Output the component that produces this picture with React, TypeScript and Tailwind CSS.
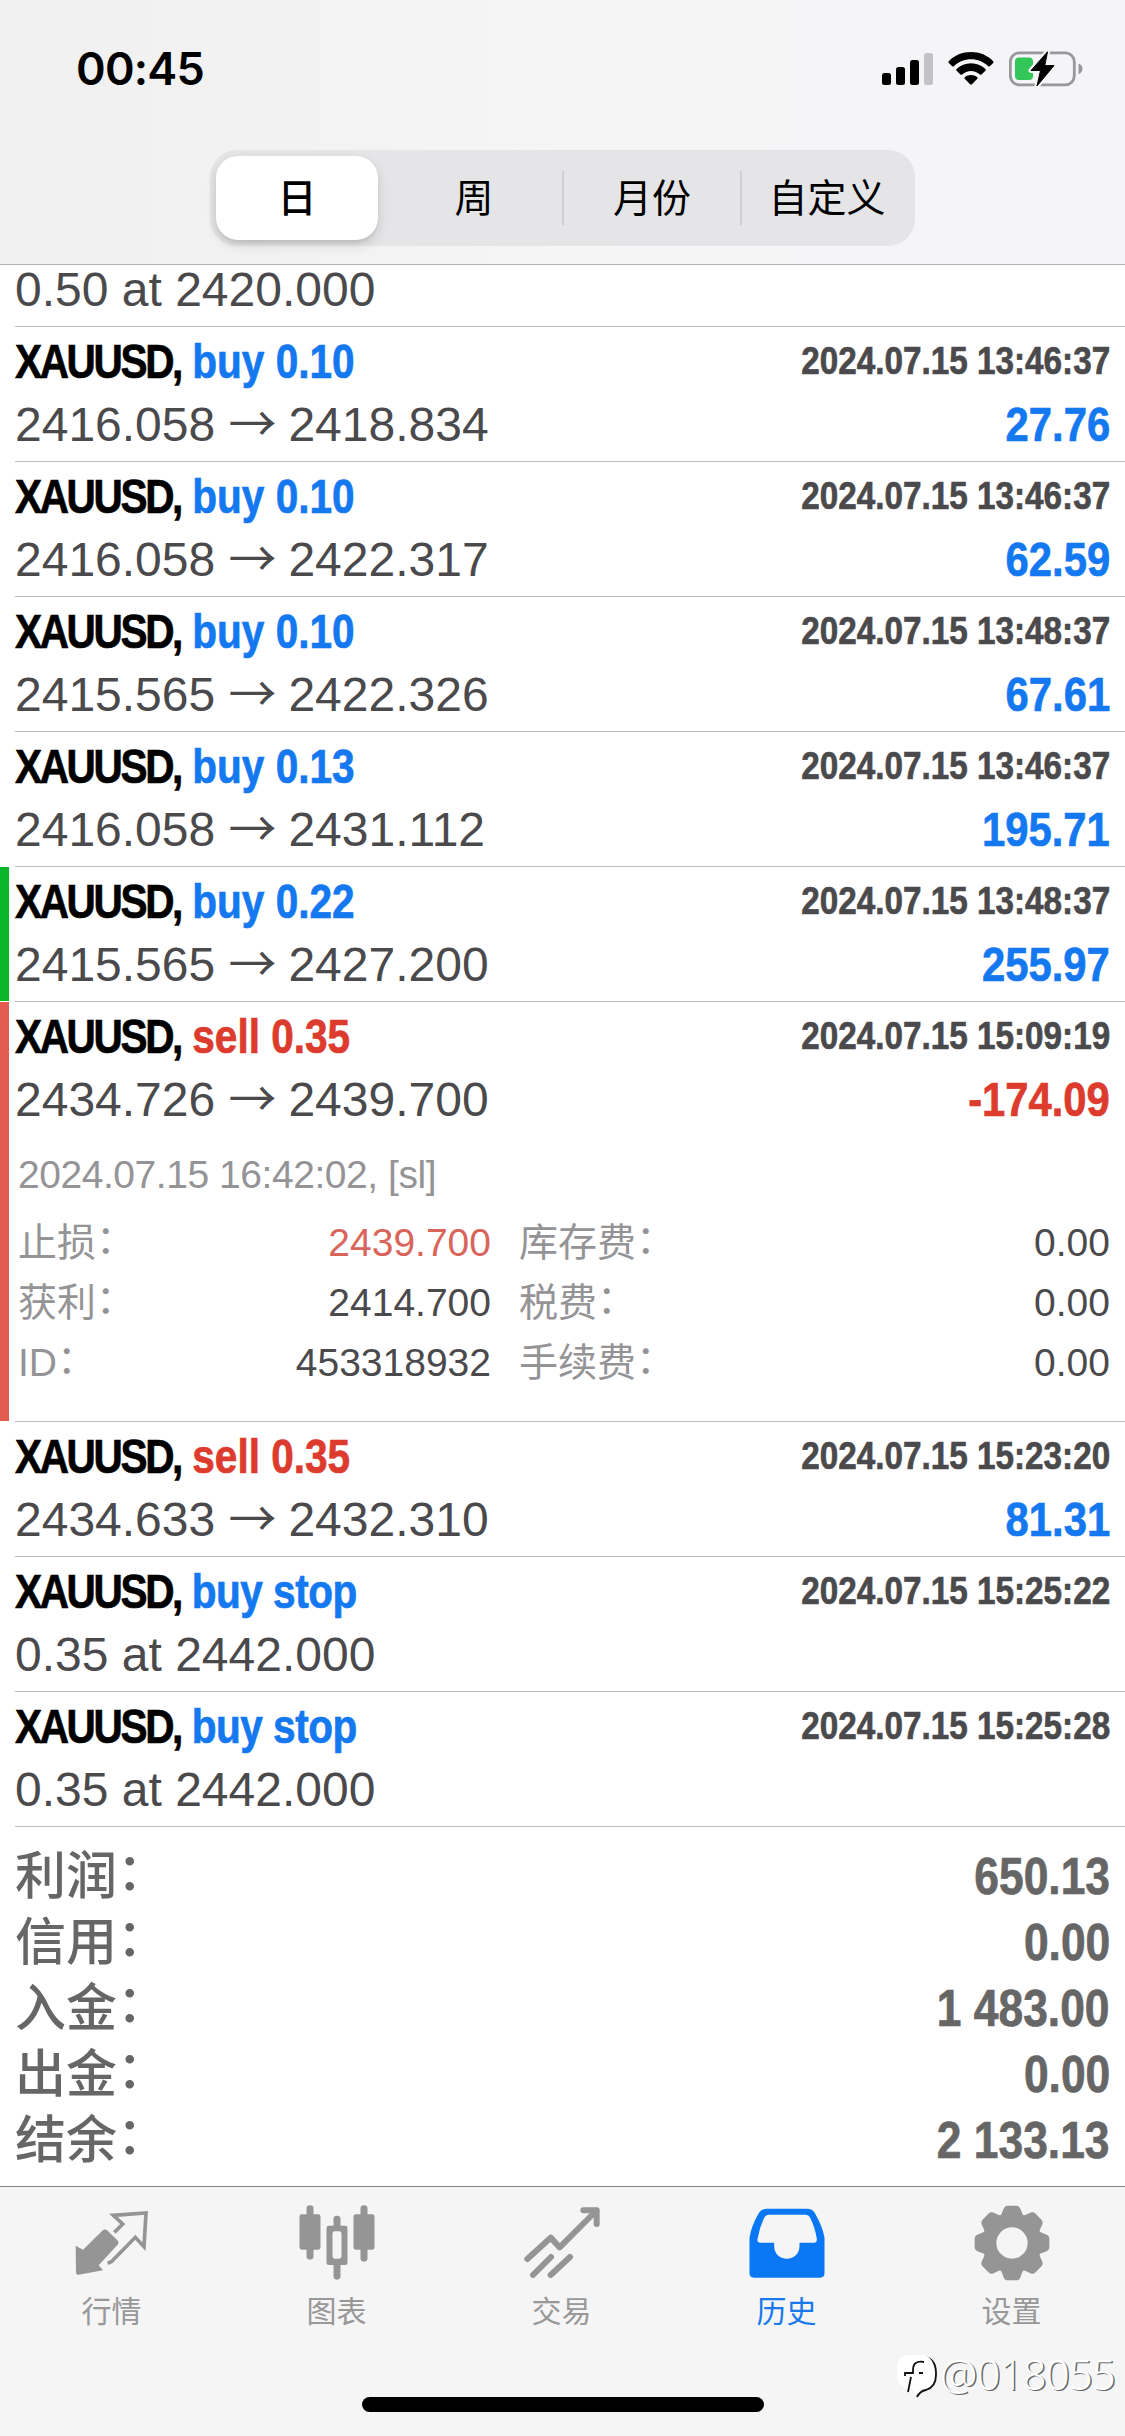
import type { ReactNode } from 'react';

type Side = 'buy' | 'sell';

interface Deal {
  side: Side;
  action: string;
  time: string;
  from: string;
  to?: string;
  profit?: string;
  marker?: 'green' | 'red';
  details?: boolean;
}

const deals: Deal[] = [
  { side: 'buy', action: 'buy 0.10', time: '2024.07.15 13:46:37', from: '2416.058', to: '2418.834', profit: '27.76' },
  { side: 'buy', action: 'buy 0.10', time: '2024.07.15 13:46:37', from: '2416.058', to: '2422.317', profit: '62.59' },
  { side: 'buy', action: 'buy 0.10', time: '2024.07.15 13:48:37', from: '2415.565', to: '2422.326', profit: '67.61' },
  { side: 'buy', action: 'buy 0.13', time: '2024.07.15 13:46:37', from: '2416.058', to: '2431.112', profit: '195.71' },
  { side: 'buy', action: 'buy 0.22', time: '2024.07.15 13:48:37', from: '2415.565', to: '2427.200', profit: '255.97', marker: 'green' },
  { side: 'sell', action: 'sell 0.35', time: '2024.07.15 15:09:19', from: '2434.726', to: '2439.700', profit: '-174.09', marker: 'red', details: true },
  { side: 'sell', action: 'sell 0.35', time: '2024.07.15 15:23:20', from: '2434.633', to: '2432.310', profit: '81.31' },
  { side: 'buy', action: 'buy stop', time: '2024.07.15 15:25:22', from: '0.35 at 2442.000' },
  { side: 'buy', action: 'buy stop', time: '2024.07.15 15:25:28', from: '0.35 at 2442.000' },
];

const details = [
  ['止损', '2439.700', '库存费', '0.00'],
  ['获利', '2414.700', '税费', '0.00'],
  ['ID', '453318932', '手续费', '0.00'],
];

const totals = [
  ['利润', '650.13'],
  ['信用', '0.00'],
  ['入金', '1 483.00'],
  ['出金', '0.00'],
  ['结余', '2 133.13'],
];

function StatusBar() {
  return (
    <div className="flex h-[138px] items-start justify-between pt-[42px] pr-[42px] pl-[76px]">
      <span className="font-['Inter'] text-[45px] leading-[54px] font-semibold tracking-[-0.8px] text-black">00:45</span>
      <div className="flex h-[54px] items-center">
        <svg width="52" height="34" viewBox="0 0 52 34" className="mr-[14px]">
          <rect x="0" y="21" width="9" height="12" rx="2.5" />
          <rect x="14" y="15" width="9" height="18" rx="2.5" />
          <rect x="28" y="8" width="9" height="25" rx="2.5" />
          <rect x="42" y="1" width="9" height="32" rx="2.5" fill="#c3c3c5" />
        </svg>
        <svg width="46" height="34" viewBox="0 0 46 34" className="mr-[15px]">
          <path d="M23 0C31.500 0 39.500 3.200 45.200 9.200Q46 10 45.200 10.900L41.800 14.200Q41 15 40.100 14.200C35.500 9.800 29.500 7.300 23 7.300S10.500 9.800 5.900 14.200Q5 15 4.200 14.200L.8 10.900Q0 10 .8 9.200C6.500 3.200 14.500 0 23 0Z" />
          <path d="M23 11.300C28.500 11.300 33.500 13.400 37.400 17Q38.200 17.800 37.400 18.700L33.500 22.500Q32.700 23.200 31.800 22.500C29.400 20.300 26.300 19.100 23 19.100S16.600 20.300 14.200 22.500Q13.300 23.200 12.500 22.500L8.600 18.700Q7.800 17.800 8.600 17C12.500 13.400 17.500 11.300 23 11.300Z" />
          <path d="M23 23C25.300 23 27.500 23.800 29.300 25.200Q30.100 26 29.300 26.800L23.900 32.300Q23 33.200 22.100 32.300L16.700 26.800Q15.900 26 16.700 25.200C18.500 23.800 20.700 23 23 23Z" />
        </svg>
        <svg width="74" height="36" viewBox="0 0 74 36">
          <rect x="1.300" y="1.800" width="64" height="32" rx="9" fill="none" stroke="#98989a" strokeWidth="2.800" />
          <path d="M69.500 12.500Q73.500 14 73.500 17.800T69.500 23.200Z" fill="#98989a" />
          <rect x="6" y="6.500" width="18" height="22.500" rx="4" fill="#33c759" />
          <path d="M38.500 .8L22 19.500H31.500L28 35L45 14.600H35.800Z" stroke="#f5f5f7" strokeWidth="5" strokeLinejoin="round" />
          <path d="M38.500 .8L22 19.500H31.500L28 35L45 14.600H35.800Z" stroke="#000" strokeWidth="1" strokeLinejoin="round" />
        </svg>
      </div>
    </div>
  );
}

function PeriodTabs() {
  return (
    <div className="mx-auto mt-3 flex h-24 w-[705px] items-center rounded-[27px] bg-[#e5e5e7] py-[5px] pr-[5px] pl-1.5 text-[39px] leading-none text-black">
      <div className="flex h-[84px] w-[162px] items-center justify-center rounded-[22px] bg-white font-medium shadow-[0_5px_12px_rgba(0,0,0,0.14),0_3px_2px_rgba(0,0,0,0.05)]">日</div>
      <div className="flex w-[184px] items-center justify-center pl-[8px]">周</div>
      <div className="h-[54px] w-0.5 bg-[#cfcfd1]" />
      <div className="flex w-[176px] items-center justify-center">月份</div>
      <div className="h-[54px] w-0.5 bg-[#cfcfd1]" />
      <div className="flex flex-1 items-center justify-center pl-0.5">自定义</div>
    </div>
  );
}

// Narrow bold face, built by squeezing the regular-width one
function Condensed({ className, children }: { className: string; children: ReactNode }) {
  return <span className={`inline-block font-bold whitespace-pre [-webkit-text-stroke:0.7px_currentColor] ${className}`}>{children}</span>;
}

function Label({ className, text }: { className?: string; text: string }) {
  return (
    <span className={className}>
      {text}
      <span className="inline-block -translate-y-[0.07em]">：</span>
    </span>
  );
}

function DealDetails() {
  return (
    <div className="h-[285px] pt-3.5 pr-[15px] pl-[3px] text-[39px] text-[#949496]">
      <div className="h-[63px] leading-[50px] tracking-[-0.450px]">2024.07.15 16:42:02, [sl]</div>
      {details.map(([label, value, feeLabel, fee], i) => (
        <div key={label} className="flex h-[60px] leading-[60px]">
          <Label className="w-[160px]" text={label} />
          <span className={`w-[313px] text-right ${i === 0 ? 'text-[#d9655a]' : 'text-[#4a4a4d]'}`}>{value}</span>
          <Label className="ml-[28px] flex-1" text={feeLabel} />
          <span className="text-[#4a4a4d]">{fee}</span>
        </div>
      ))}
    </div>
  );
}

function DealRow({ deal }: { deal: Deal }) {
  const markerColor = deal.marker === 'green' ? 'bg-[#0bb52c]' : deal.marker === 'red' ? 'bg-[#e25c50]' : '';
  const loss = deal.profit?.startsWith('-');
  return (
    <div className="flex">
      <div className={`mb-px w-[9px] ${markerColor}`} />
      <div className="ml-1.5 flex-1 border-b border-[#bcbcbe]">
        <div className="h-[134px] pt-[7px] pr-[15px] text-[48px] text-[#4a4a4d]">
          <div className="flex h-[55px] justify-between leading-[56px]">
            <Condensed className="origin-left scale-x-[0.845]">
              <span className="tracking-[-2.800px] text-black">XAUUSD,</span>
              <span className={`${deal.side === 'buy' ? 'text-[#1478f0]' : 'text-[#dc3b2d]'} ${deal.to ? '' : 'tracking-[-0.600px]'}`}> {deal.action}</span>
            </Condensed>
            <Condensed className="origin-right scale-x-[0.853] text-[39px] leading-[54px]">{deal.time}</Condensed>
          </div>
          <div className="flex justify-between leading-[71px]">
            <span>
              {deal.from}
              {deal.to && <> <span className="mr-[-1.500px] font-['Noto_Sans_CJK_SC'] leading-none">→</span> {deal.to}</>}
            </span>
            {deal.profit && (
              <Condensed className={`origin-right scale-x-[0.87] ${loss ? 'text-[#dc3b2d]' : 'text-[#1478f0]'}`}>{deal.profit}</Condensed>
            )}
          </div>
        </div>
        {deal.details && <DealDetails />}
      </div>
    </div>
  );
}

function Totals() {
  return (
    <div className="h-[359px] pt-[17px] pr-[15px] pl-[15px] text-[51px] text-[#666]">
      {totals.map(([label, value]) => (
        <div key={label} className="flex h-[66px] justify-between leading-[66px]">
          <Label className="font-medium" text={label} />
          <Condensed className="origin-right scale-x-[0.87]">{value}</Condensed>
        </div>
      ))}
    </div>
  );
}

const tabs = [
  {
    label: '行情',
    icon: (
      <svg width="80" height="80" viewBox="214 100 240 240" fill="#959595">
        <path d="M225 228L247 240L305 183Q313 176 321 183L350 212Q357 219 350 226L294 287L307 302L234 315Q226 316 226 307Z" />
        <path d="M341 188L366 163L338 137L436 130L430 231L404 203L332 276L321 281" fill="none" stroke="#959595" strokeWidth="11" />
      </svg>
    ),
  },
  {
    label: '图表',
    icon: (
      <svg width="80" height="80" viewBox="889.500 100 240 240" fill="#959595">
        <rect x="897" y="134" width="63" height="106" rx="7" />
        <rect x="918" y="107" width="21" height="163" rx="10" />
        <rect x="1059" y="134" width="63" height="106" rx="7" />
        <rect x="1080" y="107" width="21" height="169" rx="10" />
        <rect x="999" y="138" width="21" height="40" rx="10" />
        <rect x="999" y="275" width="21" height="55" rx="10" />
        <path fillRule="evenodd" d="M985 168H1034Q1041 168 1041 175V279Q1041 286 1034 286H985Q978 286 978 279V175Q978 168 985 168ZM1003 185Q996 185 996 192V260Q996 267 1003 267H1016Q1023 267 1023 260V192Q1023 185 1016 185Z" />
      </svg>
    ),
  },
  {
    label: '交易',
    icon: (
      <svg width="80" height="80" viewBox="214 100 240 240" fill="none" stroke="#959595" strokeWidth="18" strokeLinecap="round" strokeLinejoin="round">
        <path d="M230 268L300 204L327 233L436 124" />
        <path d="M398 122H438V163" />
        <path d="M247 316L301 262M300 316L358 262" />
      </svg>
    ),
  },
  {
    label: '历史',
    active: true,
    icon: (
      <svg width="80" height="80" viewBox="889.500 100 240 240" fill="#0a78f5">
        <path d="M950 117H1070Q1086 117 1093 130Q1116 170 1122 204V311Q1122 324 1109 324H910Q897 324 897 311V204Q902 170 925 130Q933 117 950 117Z" />
        <path fill="#f5f5f5" d="M956 135H1064Q1074 135 1079 144Q1094 174 1099 208Q1100 219 1090 219H1047V229C1047 253 1030 267 1009 267S971 253 971 229V219H930Q919 219 921 208Q927 174 941 144Q946 135 956 135Z" />
      </svg>
    ),
  },
  {
    label: '设置',
    icon: (
      <svg width="80" height="80" viewBox="-120 -120 240 240" fill="#959595">
        <circle r="66" fill="none" stroke="#959595" strokeWidth="38" />
        {[0, 45, 90, 135, 180, 225, 270, 315].map((angle) => (
          <path key={angle} transform={`rotate(${angle})`} d="M-38 -78Q-31 -84 -27 -98Q-23 -112 -13 -112H13Q23 -112 27 -98Q31 -84 38 -78L30 -68H-30Z" />
        ))}
      </svg>
    ),
  },
];

function TabBar() {
  return (
    <div className="relative h-[250px] border-t border-[#868688] bg-[#f5f5f5] pt-4">
      <div className="-ml-px flex">
        {tabs.map((tab) => (
          <div key={tab.label} className={`flex w-[225px] flex-col items-center text-[30px] ${tab.active ? 'text-[#1878ee]' : 'text-[#989898]'}`}>
            {tab.icon}
            <span className="mt-[7px] leading-[44px]">{tab.label}</span>
          </div>
        ))}
      </div>
      <div className="absolute bottom-6 left-[362px] h-[15px] w-[402px] rounded-full bg-black" />
      <div className="absolute top-[161px] left-[896px] flex items-center">
        <svg width="42" height="50" viewBox="0 0 42 50">
          <path d="M14 8H28Q40 10 40 24V26Q40 38 30 41Q24 42 21 48" fill="none" stroke="#111" strokeWidth="1.800" />
          <path d="M12 6H27Q38 8 38 22V26Q38 36 29 39Q23 40 19 46L17 40H12Q1 37 1 26V19Q1 7 12 6Z" fill="#fff" />
          <path d="M28 13Q17 11 17 21V24H9V27M15 28L12 43M23 24H27" fill="none" stroke="#111" strokeWidth="1.800" />
        </svg>
        <span className="ml-0.5 font-['Noto_Sans'] text-[42px] leading-[52px] font-light tracking-[-0.900px] text-white [text-shadow:1.500px_1px_0_#666]">@018055</span>
      </div>
    </div>
  );
}

export default function App() {
  return (
    <div className="w-[1125px] overflow-hidden bg-white font-['Liberation_Sans','Noto_Sans_CJK_SC',sans-serif]">
      <header className="h-[265px] border-b border-[#b4b4b6] bg-linear-to-r from-[#f0f0f1] via-[#f5f5f6] to-[#f5f5f8]">
        <StatusBar />
        <PeriodTabs />
      </header>
      <main>
        <div className="ml-[15px] h-[62px] border-b border-[#bcbcbe] text-[48px] leading-[50px] text-[#4a4a4d]">
          0.50 at 2420.000
        </div>
        {deals.map((deal, i) => (
          <DealRow key={i} deal={deal} />
        ))}
        <Totals />
      </main>
      <TabBar />
    </div>
  );
}
